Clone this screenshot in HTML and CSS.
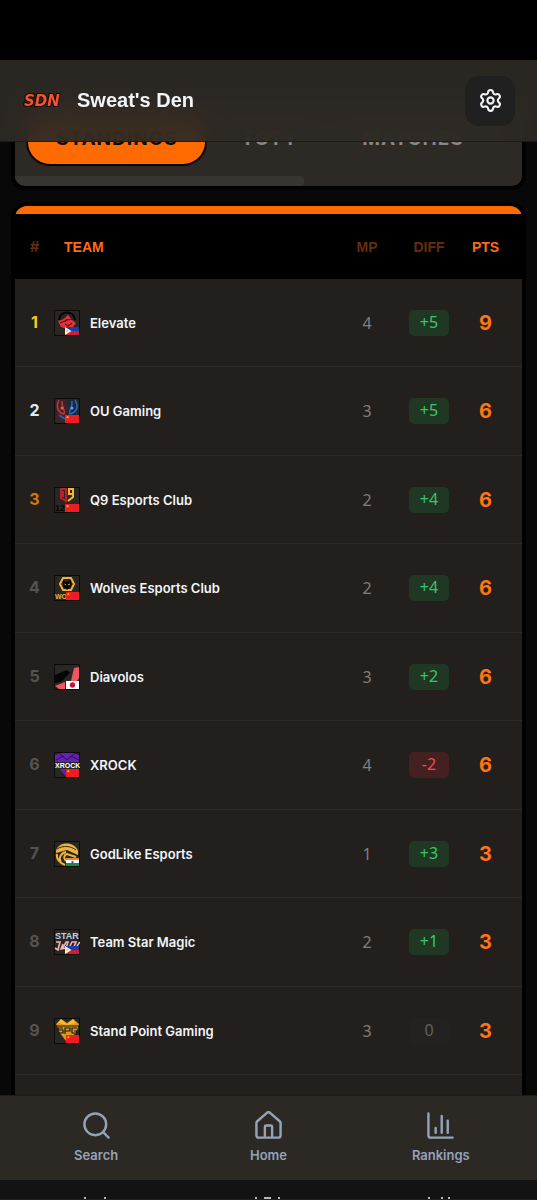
FILE: index.html
```html
<!DOCTYPE html>
<html lang="en">
<head>
<meta charset="utf-8">
<meta name="viewport" content="width=device-width, initial-scale=1">
<title>Sweat's Den</title>
<link rel="stylesheet" href="styles.css">
</head>
<body>
<svg class="defs" aria-hidden="true">
  <symbol id="cn" viewBox="0 0 14 9" preserveAspectRatio="none"><path fill="#ee1c25" d="M0 0h14v9H0z"/><path fill="#ffdf00" d="m2.5.8.5 1.1h1.1l-.9.8.4 1.2-1.1-.7-1 .7.3-1.2-.9-.8h1.1z"/></symbol>
  <symbol id="ph" viewBox="0 0 14 9" preserveAspectRatio="none"><path fill="#173fb0" d="M0 0h14v4.500H0z"/><path fill="#ce1e37" d="M0 4.500h14V9H0z"/><path fill="#f5f3e8" d="m0 0 6.500 4.500L0 9z"/><circle cx="2.200" cy="4.500" r="1" fill="#f4bd2a"/></symbol>
</svg>

<header class="topbar">
  <a class="brand" href="#">
    <svg class="brand-logo" viewBox="0 0 42 16" aria-hidden="true"><text x="2" y="13">SDN</text></svg>
    <span>Sweat's Den</span>
  </a>
  <button class="settings" aria-label="Settings">
    <svg viewBox="0 0 24 24"><path d="M9.700 4.100a2.340 2.340 0 0 1 4.660 0 2.340 2.340 0 0 0 3.320 1.920 2.340 2.340 0 0 1 2.330 4.030 2.340 2.340 0 0 0 0 3.830 2.340 2.340 0 0 1-2.330 4.030 2.340 2.340 0 0 0-3.320 1.920 2.340 2.340 0 0 1-4.660 0 2.340 2.340 0 0 0-3.320-1.920 2.340 2.340 0 0 1-2.330-4.030 2.340 2.340 0 0 0 0-3.830 2.340 2.340 0 0 1 2.330-4.030A2.340 2.340 0 0 0 9.700 4.100"/><circle cx="12" cy="12" r="3"/></svg>
  </button>
</header>

<main class="page">
  <div class="tabs">
    <div class="tab-list">
      <button class="tab tab-active">STANDINGS</button>
      <button class="tab">TOTY</button>
      <button class="tab">MATCHES</button>
    </div>
    <div class="scroll-thumb"></div>
  </div>

  <section class="card">
    <table class="standings">
      <thead>
        <tr><th class="rank dim">#</th><th class="team">TEAM</th><th class="num dim">MP</th><th class="num dim">DIFF</th><th class="num pts">PTS</th></tr>
      </thead>
      <tbody>
        <tr><td class="rank gold">1</td><td><a class="club" href="#"><svg viewBox="0 0 26 26"><path class="tile" d="M.5.5h25v25H.5z"/><path d="M5 10C6 0 20 0 21 10" fill="none" stroke="#050505" stroke-width="2"/><path fill="#e5333b" d="m4 11 6-2 4-4 4 5 4 3-3 4-6 2-6-2z"/><path d="m6 13 7-3 5-1m-7 5 3 2 4-3m-5-4-2 3" fill="none" stroke="#5e1317" stroke-width="1.200"/><use href="#ph" x="11" y="17" width="14" height="8"/></svg>Elevate</a></td><td class="num">4</td><td class="num"><span class="diff up">+5</span></td><td class="num pts">9</td></tr>
        <tr><td class="rank silver">2</td><td><a class="club" href="#"><svg viewBox="0 0 26 26"><path class="tile" d="M.5.5h25v25H.5z"/><path fill="#3b2427" d="M2 2h11v22H2z"/><path fill="#20263b" d="M13 2h11v15H13z"/><path d="M5 2c-4 8 0 13 5 14 2-4-3-6-2-13" fill="none" stroke="#c93238" stroke-width="1.500"/><path d="M21 2c5 8 0 13-5 14-2-4 3-6 2-13" fill="none" stroke="#2867c4" stroke-width="1.500"/><circle cx="8" cy="10" r="1.500" fill="#f35a50"/><circle cx="18" cy="10" r="1.500" fill="#54a0ee"/><path d="m5 17 6 4" stroke="#285da7" stroke-width="2"/><use href="#cn" x="11" y="17" width="14" height="8"/></svg>OU Gaming</a></td><td class="num">3</td><td class="num"><span class="diff up">+5</span></td><td class="num pts">6</td></tr>
        <tr><td class="rank bronze">3</td><td><a class="club" href="#"><svg viewBox="0 0 26 26"><path class="tile" d="M.5.5h25v25H.5z"/><path d="M12 2H7v9l5 3zM9 4v6" fill="none" stroke="#b7202f" stroke-width="2"/><path d="M19 7h-4V2h4v8l-5 4" fill="none" stroke="#f2b532" stroke-width="2"/><text class="mark" x="1" y="24" font-size="9" fill="#050505">12</text><use href="#cn" x="11" y="17" width="14" height="8"/></svg>Q9 Esports Club</a></td><td class="num">2</td><td class="num"><span class="diff up">+4</span></td><td class="num pts">6</td></tr>
        <tr><td class="rank">4</td><td><a class="club" href="#"><svg viewBox="0 0 26 26"><path class="tile" d="M.5.5h25v25H.5z"/><path d="m9 3-3 6 3 6h8l3-6-3-6z" fill="#25211b" stroke="#eeb03a" stroke-width="2"/><path fill="#050505" d="m9 5 3 2h2l3-2v6l-4 4-4-4z"/><path d="m10.500 9 1.500 1m4-1-2 1" stroke="#eeb03a"/><text class="mark" x="1" y="24" font-size="7" fill="#eeb03a">WO</text><use href="#cn" x="12" y="17" width="13" height="8"/></svg>Wolves Esports Club</a></td><td class="num">2</td><td class="num"><span class="diff up">+4</span></td><td class="num pts">6</td></tr>
        <tr><td class="rank">5</td><td><a class="club" href="#"><svg viewBox="0 0 26 26"><path class="tile" d="M.5.5h25v25H.5z"/><path fill="#292929" d="m1 5 12-4h9L8 15l-7 4z"/><path fill="#050505" d="m1 11 12-5 3 3-9 9-6 1z"/><path fill="#f25561" d="m25 3-5 1-3 13h6l2-3zM1 22l10-4v7H5z"/><path fill="#fff" d="M12 17h13v8H12z"/><circle cx="18.500" cy="21" r="2.700" fill="#bc173b"/></svg>Diavolos</a></td><td class="num">3</td><td class="num"><span class="diff up">+2</span></td><td class="num pts">6</td></tr>
        <tr><td class="rank">6</td><td><a class="club" href="#"><svg viewBox="0 0 26 26"><path class="tile" d="M.5.5h25v25H.5z"/><path fill="#6420b4" d="M1 3 8 1h10l7 2v7H1zM6 17h6v7l-4-4z"/><path d="m2 8 7-4 4 4 4-4 8 4M5 1l8 7 8-7" fill="none" stroke="#2e1059"/><text class="mark" x="1" y="16" font-size="7" fill="#fff">XROCK</text><use href="#cn" x="12" y="17" width="13" height="8"/></svg>XROCK</a></td><td class="num">4</td><td class="num"><span class="diff down">-2</span></td><td class="num pts">6</td></tr>
        <tr><td class="rank">7</td><td><a class="club" href="#"><svg viewBox="0 0 26 26"><path class="tile" d="M.5.5h25v25H.5z"/><path fill="#edb340" d="M2 10C4 0 21 0 24 10v4L13 9 2 12z"/><path d="M3 13c-1 5 3 9 8 11m-4-3c-3-4 0-9 5-10m0 9c-3-3-2-6 1-7l9 3" fill="none" stroke="#edb340" stroke-width="2"/><path d="M3 8c6-4 14-3 19 1" fill="none" stroke="#3a2b13"/><path fill="#ef8238" d="M12 17h13v3H12z"/><path fill="#fff" d="M12 19h13v4H12z"/><path fill="#198a42" d="M12 22h13v3H12z"/><circle cx="18.500" cy="21" r="1.200" fill="#4b56a0"/></svg>GodLike Esports</a></td><td class="num">1</td><td class="num"><span class="diff up">+3</span></td><td class="num pts">3</td></tr>
        <tr><td class="rank">8</td><td><a class="club" href="#"><svg viewBox="0 0 26 26"><path class="tile" d="M.5.5h25v25H.5z"/><text class="mark" x="1" y="10" font-size="9" fill="#b9d2ec">STAR</text><path d="M2 13h4L4 21l-3-2m8 0 3-6h2l-2 6-5 1 2-5m6 4 3-6h4l-3 7m4-3 3-4" fill="none" stroke="#efb8b7" stroke-width="1.600"/><use href="#ph" x="11" y="17" width="14" height="8"/></svg>Team Star Magic</a></td><td class="num">2</td><td class="num"><span class="diff up">+1</span></td><td class="num pts">3</td></tr>
        <tr><td class="rank">9</td><td><a class="club" href="#"><svg viewBox="0 0 26 26"><path class="tile" d="M.5.5h25v25H.5z"/><path fill="#df9a19" d="m2 6 5-5 6 4 6-4 6 5-3 9-10 8-6-8z"/><path fill="#f3bc34" d="m7 1 6 5 6-5 3 4-9 2-9-2z"/><path d="M1 8h24M9 10H4v2h5v3H4m7 1v-6h5v3h-5m12-3h-5v5h5v-2h-3" fill="none" stroke="#191714" stroke-width="1.200"/><use href="#cn" x="12" y="17" width="13" height="8"/></svg>Stand Point Gaming</a></td><td class="num">3</td><td class="num"><span class="diff even">0</span></td><td class="num pts">3</td></tr>
      </tbody>
    </table>
  </section>
</main>

<div class="dock">
  <nav class="nav">
    <a href="#"><svg viewBox="0 0 24 24"><circle cx="11" cy="11" r="9"/><path d="m17.500 17.500 4.500 4.500"/></svg>Search</a>
    <a href="#"><svg viewBox="0 0 24 24"><path d="M15 21v-8a1 1 0 0 0-1-1h-4a1 1 0 0 0-1 1v8"/><path d="M2 10a2 2 0 0 1 .7-1.500l8-7a2 2 0 0 1 2.600 0l8 7A2 2 0 0 1 22 10v10a2 2 0 0 1-2 2H4a2 2 0 0 1-2-2z"/></svg>Home</a>
    <a href="#"><svg viewBox="0 0 24 24"><path d="M2 2v18a2 2 0 0 0 2 2h18M13 18V4m5 14V8M8 18v-4"/></svg>Rankings</a>
  </nav>
  <div class="under" aria-hidden="true">
    <svg viewBox="0 0 28 2"><path d="M2 1h2M22 1h2"/></svg>
    <svg viewBox="0 0 28 2"><path d="M1 1h2M10 1h7M24 1h2"/></svg>
    <svg viewBox="0 0 28 2"><path d="M1 1h2M14 1h2M21 1h2"/></svg>
  </div>
</div>
</body>
</html>
```

FILE: styles.css
```css
* { box-sizing: border-box; }
body { margin: 0; background: #080808; color: #f1f5f9; font-family: Inter, "Liberation Sans", sans-serif; overflow: hidden; }
a { color: inherit; text-decoration: none; }
button { border: 0; font: inherit; padding: 0; }
.defs { position: absolute; width: 0; height: 0; }

.topbar { position: fixed; z-index: 2; top: 0; left: 0; right: 0; display: flex; align-items: center; justify-content: space-between; height: 142px; padding: 0 22px; border-top: 60px solid #000; border-bottom: 1px solid #2c1410; background: rgba(45, 41, 36, .93); background-clip: padding-box; backdrop-filter: blur(12px); }
.brand { display: flex; align-items: center; gap: 13px; font: bold 20px "Liberation Sans", sans-serif; }
.brand-logo { width: 42px; height: 16px; }
.brand-logo text { font: italic bold 15px "DejaVu Sans", sans-serif; fill: #f0532d; stroke: #140806; stroke-width: 2px; paint-order: stroke; }
.settings { display: grid; place-items: center; width: 50px; height: 50px; border-radius: 14px; background: #202020; }
.settings svg { width: 25px; height: 25px; fill: none; stroke: #f1f5f9; stroke-width: 2; }

.page { padding: 100px 15px 0; }
.tabs { border-radius: 10px; background: #2d2a26; box-shadow: 0 0 0 4px #000; overflow: hidden; }
.tab-list { display: flex; gap: 4px; padding: 10px 11px; }
.tab { height: 56px; padding: 0 28px; border: 2px solid transparent; border-radius: 24px; background: transparent; color: #8a8784; font-size: 19px; font-weight: 700; letter-spacing: 1px; }
.tab-active { border-color: #080402; background: #ff6b00; color: #080808; }
.scroll-thumb { width: 57%; height: 10px; border-radius: 0 4px 4px 0; background: #373530; }

.card { margin-top: 20px; border-radius: 12px 12px 0 0; background: #231f1d; box-shadow: 0 0 0 4px #000; overflow: hidden; padding-bottom: 160px; }
.card::before { content: ""; display: block; height: 8px; background: #ff6b00; }
.standings { width: 100%; table-layout: fixed; border-spacing: 0; }
th { height: 65px; padding: 0; background: #000; color: #ff6b14; font: bold 14px "Liberation Sans", sans-serif; }
td { height: 88px; padding: 0; border-bottom: 1px solid #2d2a28; }
tr:nth-child(even) td { height: 89px; }
.rank { width: 39px; text-align: center; color: #555351; font-weight: 700; }
td.rank { padding-bottom: 2px; }
th.rank { font: 600 15px Inter, sans-serif; }
th.team { padding-left: 10px; text-align: left; }
th.dim { color: #652d0a; }
td.gold { color: #facc15; }
td.silver { color: #e2e8f0; }
td.bronze { color: #d97706; }
.club { display: flex; align-items: center; gap: 10px; font-size: 13px; font-weight: 600; }
.club svg { width: 26px; height: 26px; flex: none; }
.tile { fill: #292724; stroke: #0c0b0a; }
.mark { font-family: "Liberation Sans", sans-serif; font-weight: bold; }
.num { width: 62px; text-align: center; }
td.num { color: #817e7b; font-family: "Noto Sans", sans-serif; font-size: 16px; }
.num.pts { padding-right: 11px; }
td.pts { color: #ff7414; font: bold 20px Inter, sans-serif; }
.diff { display: inline-block; width: 40px; height: 26px; border-radius: 5px; line-height: 25px; }
.up { background: #203724; color: #37c76b; }
.down { background: #442120; color: #ef4e50; }
.even { background: #242220; color: #625f5d; }

.dock { position: fixed; z-index: 2; bottom: 0; left: 0; right: 0; }
.nav { display: grid; grid-template-columns: repeat(3, 1fr); height: 85px; padding: 15px 10px 0; border-top: 1px solid #2b1714; background: #2c2824; color: #94a3b8; font-size: 13px; font-weight: 600; }
.nav a { display: flex; flex-direction: column; align-items: center; gap: 7px; }
.nav svg { width: 29px; height: 29px; fill: none; stroke: currentColor; stroke-width: 2; stroke-linecap: round; stroke-linejoin: round; }
.under { display: grid; grid-template-columns: repeat(3, 1fr); justify-items: center; align-items: end; height: 20px; padding: 0 10px; border-bottom: 1px solid #2b1d1a; background: #121312; }
.under svg { width: 28px; height: 2px; fill: none; stroke: #b8b6b3; stroke-width: 2; }
```
